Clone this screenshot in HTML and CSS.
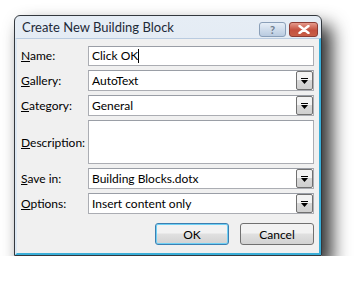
FILE: index.html
```html
<!DOCTYPE html>
<html lang="en">
<head>
    <meta charset="UTF-8">
    <title>Create New Building Block</title>
    <link rel="stylesheet" href="styles.css">
</head>
<body>
<div class="dialog">
    <div class="titleBar">
        <span class="titleText">Create New Building Block</span>
        <div class="captionButtons">
            <span class="helpButton">?</span>
            <span class="closeButton">
                <svg width="12" height="9" viewBox="0 0 12 9">
                    <path d="M1.5 1 L10.5 8 M10.5 1 L1.5 8" stroke="#fff" stroke-width="2.4" stroke-linecap="round"/>
                </svg>
            </span>
        </div>
    </div>
    <div class="content">
        <form class="form">
            <div class="row">
                <label><u>N</u>ame:</label>
                <div class="textField nameField">Click OK<span class="caret"></span></div>
            </div>
            <div class="row">
                <label><u>G</u>allery:</label>
                <div class="combo">
                    <span class="comboText">AutoText</span>
                    <span class="comboArrow"><svg width="7" height="6" viewBox="0 0 7 6"><path d="M0 0 H7 V1 H0 Z M0 2 H7 L3.5 6 Z" fill="#000"/></svg></span>
                </div>
            </div>
            <div class="row">
                <label><u>C</u>ategory:</label>
                <div class="combo">
                    <span class="comboText">General</span>
                    <span class="comboArrow"><svg width="7" height="6" viewBox="0 0 7 6"><path d="M0 0 H7 V1 H0 Z M0 2 H7 L3.5 6 Z" fill="#000"/></svg></span>
                </div>
            </div>
            <div class="row descRow">
                <label><u>D</u>escription:</label>
                <div class="textField descField"></div>
            </div>
            <div class="row">
                <label><u>S</u>ave in:</label>
                <div class="combo">
                    <span class="comboText">Building Blocks.dotx</span>
                    <span class="comboArrow"><svg width="7" height="6" viewBox="0 0 7 6"><path d="M0 0 H7 V1 H0 Z M0 2 H7 L3.5 6 Z" fill="#000"/></svg></span>
                </div>
            </div>
            <div class="row">
                <label><u>O</u>ptions:</label>
                <div class="combo">
                    <span class="comboText">Insert content only</span>
                    <span class="comboArrow"><svg width="7" height="6" viewBox="0 0 7 6"><path d="M0 0 H7 V1 H0 Z M0 2 H7 L3.5 6 Z" fill="#000"/></svg></span>
                </div>
            </div>
            <div class="buttons">
                <span class="button defaultButton">OK</span>
                <span class="button">Cancel</span>
            </div>
        </form>
    </div>
</div>
</body>
</html>
```

FILE: styles.css
```css
* {
    box-sizing: border-box;
}

body {
    margin: 0;
    background: #fff;
    font-family: Lato, "Noto Sans", sans-serif;
    font-size: 12px;
    color: #000;
}

.dialog {
    margin: 15px 0 0 14px;
    width: 308px;
    height: 241px;
    border: 1px solid #33383e;
    border-radius: 6px 6px 0 0;
    background: linear-gradient(#e6edf5, #d3e0ee);
    box-shadow: 9px 11px 18px 1px rgba(0, 0, 0, 0.8);
    display: flex;
    flex-direction: column;
}

.titleBar {
    height: 22px;
    display: flex;
    align-items: center;
    justify-content: space-between;
    padding: 0 3px 0 7px;
}

.titleText {
    font-size: 13px;
    color: #1e2a38;
}

.captionButtons {
    display: flex;
    gap: 3px;
    margin-top: 4px;
}

.helpButton, .closeButton {
    height: 15px;
    border-radius: 3px;
    display: flex;
    align-items: center;
    justify-content: center;
}

.helpButton {
    width: 27px;
    border: 1px solid #8a9fb8;
    background: linear-gradient(#e6eef7, #b9cbe0);
    color: #6f7d8e;
    font-weight: bold;
    font-size: 11px;
    line-height: 1;
}

.closeButton {
    width: 29px;
    border: 1px solid #8c3c35;
    background: linear-gradient(#e69a8c, #c4503f 55%, #c85f48);
}

.content {
    flex: 1;
    background: #f0f0f0;
    border-top: 1px solid #b9cbe0;
    border-left: 2px solid #dde8f3;
    border-bottom: 2px solid #3aaed8;
    border-right: 2px solid #3aaed8;
    padding: 6px 5px 0 4px;
}

.form {
    display: flex;
    flex-direction: column;
    gap: 4px;
}

.row {
    display: flex;
    align-items: center;
    height: 21px;
}

.row label {
    width: 67px;
    flex: none;
}

.textField, .combo {
    flex: 1;
    height: 100%;
    background: #fff;
    border: 1px solid #abadb3;
    border-top-color: #9a9ea6;
    display: flex;
    align-items: center;
    padding-left: 3px;
    white-space: nowrap;
}

.nameField {
    height: 20px;
}

.caret {
    display: inline-block;
    width: 1px;
    height: 14px;
    background: #000;
}

.descRow {
    height: 44px;
}

.combo {
    justify-content: space-between;
    padding-right: 0;
}

.comboArrow {
    width: 17px;
    height: 100%;
    border: 1px solid #707070;
    border-radius: 2px;
    background: linear-gradient(#f3f3f3 45%, #d8d8d8 50%, #cfcfcf);
    display: flex;
    align-items: center;
    justify-content: center;
}

.buttons {
    display: flex;
    justify-content: flex-end;
    gap: 11px;
    margin-top: 5px;
}

.button {
    width: 74px;
    height: 22px;
    border: 1px solid #707070;
    border-radius: 3px;
    background: linear-gradient(#f2f2f2 45%, #e0e0e0 50%, #d2d2d2);
    display: flex;
    align-items: center;
    justify-content: center;
}

.defaultButton {
    border-color: #3c7fb1;
    box-shadow: inset 0 0 0 1px #6fd0f5;
}
```
